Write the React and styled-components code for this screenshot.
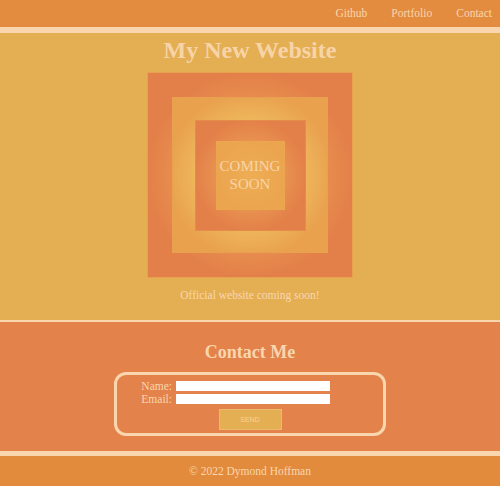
import React from "react";
import styled, { createGlobalStyle } from "styled-components";

const GlobalStyle = createGlobalStyle`
  html, body { margin: 0; padding: 0; }
  body {
    background: #e4ae52;
    font-family: "Liberation Serif", Georgia, serif;
    color: #f9d6ae;
  }
`;

const Page = styled.div`
  width: 500px;
  min-height: 486px;
  display: flex;
  flex-direction: column;
`;

const Header = styled.header`
  height: 27px;
  background: #e38b3f;
  border-bottom: 6px solid #f9d6ae;
  display: flex;
  align-items: center;
  justify-content: flex-end;
  padding-right: 8px;
  gap: 24px;
`;

const NavLink = styled.a`
  color: #f9d6ae;
  text-decoration: none;
  font-size: 11.5px;
  line-height: 1;
`;

const Main = styled.main`
  height: 287px;
  background: #e4ae52;
  border-bottom: 2px solid #f9d6ae;
  display: flex;
  flex-direction: column;
  align-items: center;
`;

const Title = styled.h1`
  margin: 5px 0 0;
  font-size: 24px;
  line-height: 24px;
  font-weight: bold;
  color: #f7d4a8;
`;

const gradients = {
  outer: "radial-gradient(circle at center, #ea9852 38%, #e37f49 72%)",
  light: "radial-gradient(circle at center, #efba5e 45%, #e9a14e 76%)",
  warm: "radial-gradient(circle at center, #ea9a53 32%, #e38049 72%)",
  core: "radial-gradient(circle at center, #eead54 0%, #eba54f 70%)",
};

const Square = styled.div`
  width: ${(p) => p.$size}px;
  height: ${(p) => p.$size}px;
  flex: none;
  box-sizing: border-box;
  display: flex;
  align-items: center;
  justify-content: center;
  border: 1px solid ${(p) => p.$edge};
  background: ${(p) => gradients[p.$tone]};
`;

const Outer = styled(Square)`
  margin-top: 10px;
`;

const Soon = styled.div`
  text-align: center;
  font-size: 15px;
  line-height: 18px;
  color: #f7d4a8;
`;

const Tagline = styled.p`
  margin: 10px 0 0;
  font-size: 11.5px;
  line-height: 14px;
`;

const Contact = styled.section`
  height: 129px;
  background: #e3824a;
  display: flex;
  flex-direction: column;
  align-items: center;
`;

const ContactTitle = styled.h2`
  margin: 20px 0 0;
  font-size: 18px;
  line-height: 20px;
  font-weight: bold;
`;

const FormBox = styled.form`
  margin-top: 10px;
  width: 272px;
  height: 64px;
  box-sizing: border-box;
  border: 3px solid #f9d6ae;
  border-radius: 12px;
  display: flex;
  flex-direction: column;
  align-items: center;
  padding-top: 6px;
`;

const Fields = styled.div`
  align-self: flex-start;
  margin-left: 3px;
  display: grid;
  grid-template-columns: 52px 154px;
  column-gap: 4px;
  row-gap: 3px;
  align-items: center;
`;

const Label = styled.label`
  text-align: right;
  font-size: 11.5px;
  line-height: 10px;
`;

const Input = styled.input`
  height: 10px;
  box-sizing: border-box;
  border: none;
  background: #fff;
  padding: 0;
  margin: 0;
`;

const SendButton = styled.button`
  margin-top: 5px;
  width: 63px;
  height: 21px;
  box-sizing: border-box;
  background: #e4ae52;
  border: 1px solid #ecbc6c;
  color: #f6d3a3;
  font-family: "Liberation Sans", Arial, sans-serif;
  font-size: 7px;
  padding: 0;
`;

const Footer = styled.footer`
  height: 30px;
  background: #e38b3c;
  border-top: 5px solid #f9d6ae;
  display: flex;
  align-items: center;
  justify-content: center;
  font-size: 11.5px;
`;

export default function App() {
  return (
    <Page>
      <GlobalStyle />
      <Header>
        <NavLink href="#">Github</NavLink>
        <NavLink href="#">Portfolio</NavLink>
        <NavLink href="#">Contact</NavLink>
      </Header>
      <Main>
        <Title>My New Website</Title>
        <Outer $size={206} $tone="outer" $edge="#e9a04f">
          <Square $size={156} $tone="light" $edge="#e9a04f">
            <Square $size={111} $tone="warm" $edge="#e58c4b">
              <Square $size={69} $tone="core" $edge="#eca650">
                <Soon>
                  COMING
                  <br />
                  SOON
                </Soon>
              </Square>
            </Square>
          </Square>
        </Outer>
        <Tagline>Official website coming soon!</Tagline>
      </Main>
      <Contact>
        <ContactTitle>Contact Me</ContactTitle>
        <FormBox onSubmit={(e) => e.preventDefault()}>
          <Fields>
            <Label>Name:</Label>
            <Input type="text" />
            <Label>Email:</Label>
            <Input type="text" />
          </Fields>
          <SendButton type="submit">SEND</SendButton>
        </FormBox>
      </Contact>
      <Footer>© 2022 Dymond Hoffman</Footer>
    </Page>
  );
}
